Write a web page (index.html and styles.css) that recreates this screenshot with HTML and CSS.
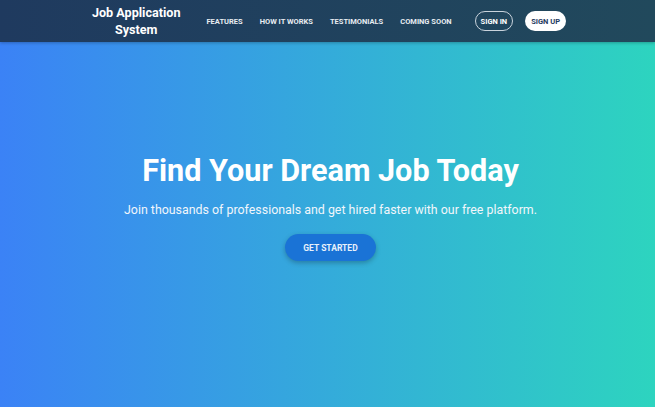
FILE: index.html
```html
<!DOCTYPE html>
<html lang="en">
<head>
<meta charset="utf-8">
<title>Job Application System</title>
<link rel="stylesheet" href="styles.css">
</head>
<body>
<header class="topbar">
  <div class="brand">Job Application<br>System</div>
  <nav class="nav">
    <a class="nav-link" href="#">Features</a>
    <a class="nav-link" href="#">How it works</a>
    <a class="nav-link" href="#">Testimonials</a>
    <a class="nav-link" href="#">Coming soon</a>
  </nav>
  <div class="auth">
    <a class="btn-outline" href="#">Sign in</a>
    <a class="btn-white" href="#">Sign up</a>
  </div>
</header>
<main class="hero">
  <h1 class="hero-title">Find Your Dream Job Today</h1>
  <p class="hero-sub">Join thousands of professionals and get hired faster with our free platform.</p>
  <a class="btn-cta" href="#">Get started</a>
</main>
</body>
</html>
```
FILE: styles.css
```css
* { box-sizing: border-box; }
html, body { margin: 0; padding: 0; height: 100%; }
body {
  font-family: Roboto, "Liberation Sans", sans-serif;
  background: linear-gradient(90deg, #3b82f6 0%, #2dd4bf 100%);
  color: #fff;
  display: flex;
  flex-direction: column;
  min-height: 407px;
}
a { text-decoration: none; color: inherit; }
.topbar {
  height: 42px;
  flex: none;
  background: linear-gradient(90deg, #1f3a5f 0%, #21495c 100%);
  display: flex;
  align-items: center;
  justify-content: center;
  padding-left: 3px;
  box-shadow: 0 1px 3px rgba(0,0,0,0.25);
}
.brand {
  font-size: 12.6px;
  font-weight: 700;
  line-height: 17px;
  text-align: center;
  margin-right: 26px;
}
.nav { display: flex; gap: 17px; }
.nav-link {
  font-size: 7.5px;
  font-weight: 700;
  text-transform: uppercase;
  color: #e8edf2;
}
.auth { display: flex; gap: 12px; margin-left: 23px; }
.btn-outline, .btn-white {
  font-size: 7.5px;
  font-weight: 700;
  text-transform: uppercase;
  height: 20px;
  display: flex;
  align-items: center;
  padding: 0 5px;
  border-radius: 10px;
}
.btn-outline { border: 1px solid #c9d3dc; color: #fff; }
.btn-white { background: #fff; color: #1f3a5f; padding: 0 6px; }
.hero {
  flex: 1;
  display: flex;
  flex-direction: column;
  align-items: center;
  padding-top: 110px;
  padding-left: 6px;
}
.hero-title {
  margin: 0;
  font-size: 30.6px;
  font-weight: 700;
  line-height: 38px;
}
.hero-sub {
  margin: 12px 0 0;
  font-size: 12.4px;
  line-height: 16px;
  color: #f1f6fb;
}
.btn-cta {
  margin-top: 16px;
  background: #1a73d6;
  color: #e8f1fb;
  font-size: 8.5px;
  font-weight: 700;
  text-transform: uppercase;
  width: 91px;
  height: 27px;
  border-radius: 14px;
  display: flex;
  align-items: center;
  justify-content: center;
  box-shadow: 0 2px 5px rgba(0,0,0,0.25);
}
```
